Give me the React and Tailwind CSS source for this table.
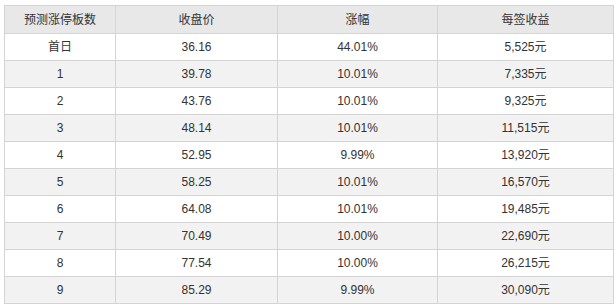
import React from 'react';

const rows = [
  ['首日', '36.16', '44.01%', '5,525元'],
  ['1', '39.78', '10.01%', '7,335元'],
  ['2', '43.76', '10.01%', '9,325元'],
  ['3', '48.14', '10.01%', '11,515元'],
  ['4', '52.95', '9.99%', '13,920元'],
  ['5', '58.25', '10.01%', '16,570元'],
  ['6', '64.08', '10.01%', '19,485元'],
  ['7', '70.49', '10.00%', '22,690元'],
  ['8', '77.54', '10.00%', '26,215元'],
  ['9', '85.29', '9.99%', '30,090元'],
];

const headers = ['预测涨停板数', '收盘价', '涨幅', '每签收益'];

const App = () => {
  return (
    <div className="w-[616px] h-[307px] bg-white pt-[5px] pl-[4px]">
      <table
        className="border-collapse text-[12px] text-[#333] w-[609px] table-fixed"
        style={{ fontFamily: '"Liberation Sans", Arial, "Noto Sans CJK SC", sans-serif' }}
      >
        <colgroup>
          <col className="w-[111px]" />
          <col className="w-[162px]" />
          <col className="w-[160px]" />
          <col className="w-[176px]" />
        </colgroup>
        <thead>
          <tr className="bg-[#e8e8e8] h-[28px]">
            {headers.map(h => (
              <th key={h} className="border border-[#d4d4d4] font-normal text-center p-0">
                {h}
              </th>
            ))}
          </tr>
        </thead>
        <tbody>
          {rows.map((r, i) => (
            <tr key={i} className={`h-[27px] ${i % 2 === 0 ? 'bg-white' : 'bg-[#f2f2f2]'}`}>
              {r.map((c, j) => (
                <td key={j} className="border border-[#d4d4d4] text-center p-0">
                  {c}
                </td>
              ))}
            </tr>
          ))}
        </tbody>
      </table>
    </div>
  );
};

export default App;
